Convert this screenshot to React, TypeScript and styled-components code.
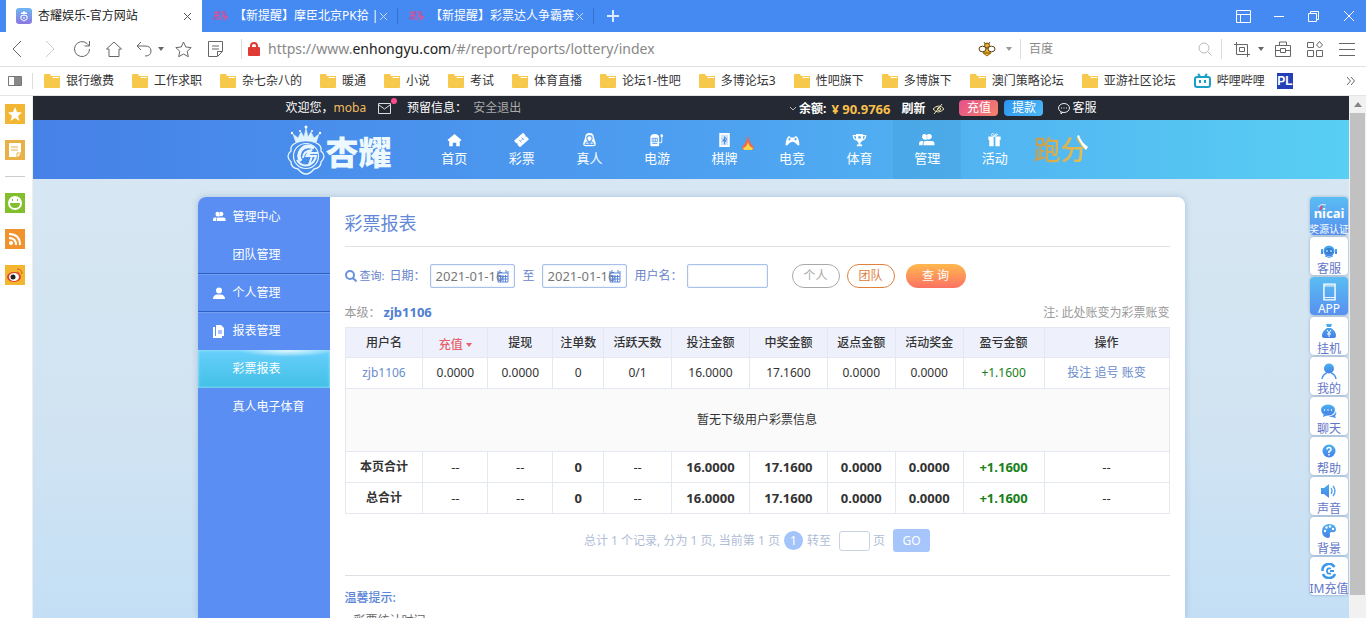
import React from 'react';
import styled, { createGlobalStyle, css } from 'styled-components';

const GlobalStyle = createGlobalStyle`
  * { box-sizing: border-box; }
  body {
    margin: 0;
    overflow: hidden;
    font-family: "Noto Sans", "Noto Sans CJK SC", sans-serif;
    font-size: 12px;
    line-height: 20px;
    color: #333;
  }
  button, input { font: inherit; margin: 0; padding: 0; }
  button { background: none; border: 0; color: inherit; cursor: pointer; }
  a { color: inherit; text-decoration: none; }
  h1, h2, p { margin: 0; padding: 0; }
  svg { display: block; flex: none; }
`;

const Browser = styled.div`
  display: flex;
  flex-direction: column;
  height: 100vh;
  min-width: 1200px;
  background: #fff;
`;

/* ---------- tab strip ---------- */
const TabStrip = styled.header`
  display: flex;
  align-items: center;
  flex: none;
  height: 32px;
  padding-left: 6px;
  background: #4589f2;
  color: #fff;
`;
const Tab = styled.div<{ $active?: boolean }>`
  display: flex;
  align-items: center;
  width: 196px;
  height: 32px;
  padding: 0 10px;
  ${(p) => p.$active && css`background: #fff; color: #222;`}
`;
const TabTitle = styled.span`
  flex: 1;
  margin-left: 6px;
  white-space: nowrap;
`;
const TabClose = styled.button`
  display: grid;
  place-items: center;
  width: 9px;
  height: 16px;
`;
const TabDivider = styled.i`
  width: 1px;
  height: 16px;
  margin-left: -1px;
  background: #3371cc;
`;
const NewTab = styled.button`
  display: grid;
  place-items: center;
  width: 38px;
  height: 32px;
`;
const WindowButtons = styled.div`
  display: flex;
  margin-left: auto;
`;
const WindowButton = styled.button`
  display: grid;
  place-items: center;
  width: 35px;
  height: 32px;
`;

/* ---------- address bar ---------- */
const AddressBar = styled.div`
  display: flex;
  align-items: center;
  flex: none;
  height: 35px;
  border-bottom: 1px solid #e2e2e6;
  color: #666;
`;
const ToolButton = styled.button<{ $w?: number }>`
  display: grid;
  place-items: center;
  width: ${(p) => p.$w ?? 32}px;
  height: 32px;
  flex: none;
`;
const Spacer = styled.i<{ $w: number }>`
  flex: none;
  width: ${(p) => p.$w}px;
`;
const BarDivider = styled.i`
  width: 1px;
  height: 20px;
  background: #dcdce0;
`;
const Url = styled.div`
  flex: 1;
  padding-left: 2px;
  font-size: 14px;
  color: #888;
  white-space: nowrap;
  b { font-weight: 400; color: #222; }
`;
const WebSearch = styled.input`
  width: 160px;
  margin-left: 8px;
  border: 0;
  outline: 0;
  &::placeholder { color: #888; opacity: 1; }
`;

/* ---------- bookmarks ---------- */
const Bookmarks = styled.nav`
  display: flex;
  align-items: center;
  flex: none;
  height: 29px;
  padding: 0 11px 0 8px;
  border-bottom: 1px solid #e4e4e8;
  gap: 18px;
  white-space: nowrap;
`;
const Bookmark = styled.a`
  display: flex;
  align-items: center;
  gap: 6px;
`;
const BookmarkToggle = styled.button`
  display: flex;
  align-items: center;
  width: 25px;
  height: 16px;
  margin-right: -7px;
  border-right: 1px solid #ddd;
`;
const PlBadge = styled.a`
  width: 16px;
  height: 16px;
  margin-left: -6px;
  background: #2340b8;
  color: #fff;
  font: bold 12px/16px "Liberation Sans", sans-serif;
  text-align: center;
`;
const MoreBookmarks = styled.button`
  margin-left: auto;
  color: #666;
`;

/* ---------- body columns ---------- */
const Body = styled.div`
  display: flex;
  flex: 1;
  min-height: 0;
`;
const ToolRail = styled.aside`
  display: flex;
  flex-direction: column;
  align-items: center;
  width: 33px;
  padding: 8px 3px 0 0;
  gap: 16px;
  flex: none;
  border-right: 1px solid #eee;
`;
const RailLine = styled.i`
  width: 20px;
  height: 1px;
  background: #ccc;
`;
const ScrollTrack = styled.div`
  flex: none;
  width: 17px;
  padding: 0 1px;
  background: #f1f1f1;
`;
const ScrollArrow = styled.div`
  display: grid;
  place-items: center;
  height: 17px;
`;
const ScrollThumb = styled.div`
  height: 482px;
  background: #c1c1c1;
`;
const Site = styled.div`
  position: relative;
  display: flex;
  flex-direction: column;
  flex: 1;
  min-width: 0;
  overflow: hidden;
  background: linear-gradient(#d8e7f2, #d2e4f2 60%, #c4dff5);
`;

/* ---------- account bar ---------- */
const AccountBar = styled.div`
  flex: none;
  height: 24px;
  background: #242933;
  color: #fff;
`;
const Centered = styled.div`
  display: flex;
  align-items: center;
  width: 811px;
  height: 100%;
  margin: 0 auto;
`;
const Member = styled.span`
  color: #f2bd5e;
`;
const Mail = styled.a`
  position: relative;
  margin: 0 16px 0 12px;
  &::after {
    content: "";
    position: absolute;
    top: -5px;
    right: -6px;
    width: 6px;
    height: 6px;
    border-radius: 50%;
    background: #ff4b8b;
  }
`;
const Logout = styled.a`
  margin-left: 6px;
  color: #aaa;
`;
const Balance = styled.div`
  display: flex;
  align-items: center;
  margin-left: auto;
  padding-top: 2px;
  font-weight: 700;
`;
const Amount = styled.span`
  margin: 0 11px 0 5px;
  font-size: 13px;
  color: #f9bf4b;
`;
const Pill = styled.button<{ $kind: 'in' | 'out' }>`
  width: 39px;
  height: 16px;
  line-height: 16px;
  margin-right: 6px;
  border-radius: 4px;
  color: #fff;
  background: ${(p) => (p.$kind === 'in'
    ? 'linear-gradient(135deg, #e6508b, #f5826a)'
    : 'linear-gradient(135deg, #2b93f0, #4db9f5)')};
`;
const Service = styled.a`
  display: flex;
  align-items: center;
  gap: 2px;
  margin-left: 9px;
`;

/* ---------- main navigation ---------- */
const NavBar = styled.div`
  flex: none;
  height: 59px;
  background: linear-gradient(90deg, #4681e8, #4d9ff0 50%, #58cff3);
  color: #fff;
`;
const Logo = styled.a`
  display: flex;
  align-items: center;
  width: 135px;
`;
const LogoText = styled.span`
  margin-top: 6px;
  font-size: 33px;
  font-weight: 900;
  line-height: 40px;
  color: #eef9ff;
`;
const NavList = styled.nav`
  display: grid;
  grid-template-columns: repeat(9, 1fr);
  width: 608px;
  height: 100%;
`;
const NavItem = styled.a<{ $active?: boolean }>`
  position: relative;
  display: flex;
  flex-direction: column;
  align-items: center;
  padding-top: 13px;
  gap: 1px;
  font-size: 13px;
  line-height: 20px;
  background: ${(p) => (p.$active ? 'rgba(60, 150, 210, .28)' : 'none')};
`;
const Flame = styled.span`
  position: absolute;
  top: 15px;
  right: 3px;
`;
const GoldLink = styled.a`
  position: relative;
  margin-left: 5px;
  font-size: 27px;
  font-weight: 500;
  line-height: 40px;
  background: linear-gradient(100deg, #b89a5c, #dcae4c 40%, #ecc050);
  background-clip: text;
  color: transparent;
`;
const Glint = styled.svg`
  position: absolute;
  top: 5px;
  right: -1px;
`;

/* ---------- panel ---------- */
const Panel = styled.div`
  display: flex;
  flex: 1;
  width: 75%;
  min-height: 0;
  margin: 18px auto 0;
  border-radius: 8px 8px 0 0;
  background: #fff;
  box-shadow: 0 0 6px rgba(100, 140, 180, .4);
`;
const SideMenu = styled.nav`
  flex: none;
  width: 132px;
  padding-top: 1px;
  border-radius: 8px 0 0 0;
  background: #5a8ef2;
  color: #fff;
`;
const SideItem = styled.a<{ $active?: boolean; $line?: boolean }>`
  display: flex;
  align-items: center;
  height: 38px;
  padding-left: 15px;
  ${(p) => p.$line && css`
    border-bottom: 1px solid #2d5fc4;
    box-shadow: 0 1px #73a0f5;
  `}
  ${(p) => p.$active && css`
    background:
      radial-gradient(ellipse 50px 7px at 68% 0, rgba(255, 255, 255, .9), rgba(255, 255, 255, 0)),
      linear-gradient(#67cffb, #42c0e6);
    box-shadow: inset 0 0 3px #b4ebff;
  `}
`;
const SideIcon = styled.span`
  width: 20px;
`;
const Report = styled.main`
  flex: 1;
  min-width: 0;
  padding: 4px 15px 0;
  overflow: hidden;
`;
const Title = styled.h1`
  font-size: 18px;
  font-weight: 400;
  line-height: 45px;
  color: #6288d8;
  border-bottom: 1px solid #e0e2e8;
`;
const Filters = styled.form`
  display: flex;
  align-items: center;
  height: 24px;
  margin-top: 17px;
  color: #6683cc;
`;
const QueryLabel = styled.span`
  width: 30px;
  margin-left: 3px;
  font-size: 11px;
`;
const Field = styled.label<{ $gap?: number }>`
  position: relative;
  display: flex;
  align-items: center;
  gap: ${(p) => p.$gap ?? 4}px;
  margin-right: 8px;
`;
const TextBox = styled.input<{ $w: number }>`
  width: ${(p) => p.$w}px;
  height: 24px;
  padding-left: 5px;
  border: 1px solid #a9c0e8;
  border-radius: 2px;
  background: #fff;
  box-shadow: inset 0 0 2px #c8d8f2;
  color: #777;
  outline: 0;
`;
const DateBox = styled(TextBox)`
  font-size: 13px;
`;
const CalendarIcon = styled.svg`
  position: absolute;
  right: 6px;
`;
const RoundButton = styled.button<{ $color: string }>`
  width: 48px;
  height: 24px;
  margin-right: 7px;
  border: 1px solid ${(p) => p.$color};
  border-radius: 12px;
  color: ${(p) => p.$color};
`;
const Submit = styled.button`
  width: 60px;
  height: 24px;
  margin-left: 4px;
  border-radius: 12px;
  background: linear-gradient(#ffb84f, #fb7262);
  color: #fff;
`;
const LevelRow = styled.div`
  display: flex;
  justify-content: space-between;
  margin-top: 10px;
  line-height: 29px;
  color: #999;
`;
const Level = styled.b`
  margin-left: 3px;
  font-size: 13px;
  color: #5080d0;
`;
const Table = styled.table`
  width: 100%;
  table-layout: fixed;
  border-collapse: collapse;
  line-height: 18px;
  text-align: center;
  th, td { padding: 0; border: 1px solid #e4e8f0; }
`;
const HeadRow = styled.tr`
  height: 30px;
  background: #eef1fb;
`;
const HeadCell = styled.th`
  font-weight: 500;
`;
const SortButton = styled.button`
  display: inline-flex;
  align-items: center;
  gap: 3px;
  padding-top: 4px;
  color: #e8606c;
  font-weight: 500;
`;
const Row = styled.tr`
  height: 31px;
`;
const TotalName = styled.th`
  font-weight: 700;
`;
const TotalCell = styled.td<{ $blank?: boolean }>`
  font-size: 13px;
  font-weight: ${(p) => (p.$blank ? 400 : 700)};
`;
const EmptyCell = styled.td`
  height: 63px;
  background: #fafafa;
`;
const Profit = styled.td`
  color: #178017;
`;
const TotalProfit = styled(TotalCell)`
  color: #178017;
`;
const Link = styled.a`
  color: #6a8ccc;
`;
const Pager = styled.div`
  display: flex;
  align-items: center;
  justify-content: center;
  margin-top: 15px;
  color: #afbdd6;
`;
const PageDot = styled.button`
  width: 19px;
  height: 19px;
  margin: 0 4px;
  border-radius: 50%;
  background: #a3c4fb;
  color: #fff;
  line-height: 19px;
`;
const PageInput = styled.input`
  width: 31px;
  height: 20px;
  margin: 0 3px 0 8px;
  border: 1px solid #c8d4e4;
  border-radius: 3px;
`;
const GoButton = styled.button`
  width: 37px;
  height: 23px;
  margin-left: 8px;
  border-radius: 3px;
  background: #a5c5fb;
  color: #fff;
`;
const Tips = styled.section`
  margin-top: 23px;
  padding-top: 12px;
  border-top: 1px solid #dcdfe4;
  color: #666;
`;
const TipsTitle = styled.h2`
  font-size: 12px;
  font-weight: 500;
  line-height: 20px;
  color: #5b85d6;
`;
const TipLine = styled.p`
  padding: 3px 0 0 9px;
`;

/* ---------- floating shortcuts ---------- */
const Floats = styled.nav`
  position: absolute;
  top: 101px;
  right: 1px;
  display: flex;
  flex-direction: column;
  gap: 2px;
`;
const Float = styled.a<{ $solid?: boolean }>`
  position: relative;
  display: flex;
  flex-direction: column;
  align-items: center;
  justify-content: space-between;
  width: 38px;
  height: 38px;
  padding-top: 6px;
  border-radius: 4px;
  line-height: 13px;
  white-space: nowrap;
  background: ${(p) => (p.$solid ? 'linear-gradient(#59bdf2, #5790f0)' : '#fff')};
  color: ${(p) => (p.$solid ? '#fff' : '#6276c8')};
  box-shadow: 0 0 3px rgba(80, 110, 150, .5);
`;
const Brand = styled.b`
  font-size: 13px;
  line-height: 20px;
`;
const BrandMark = styled.svg`
  position: absolute;
  top: 6px;
  left: 7px;
`;
const BrandNote = styled.span`
  font-size: 10px;
  line-height: 12px;
`;

/* ---------- icons ---------- */
type LineProps = { d: string; w?: number; h?: number; color?: string; sw?: number };
const Line = ({ d, w = 18, h = w, color = 'currentColor', sw = 1 }: LineProps) => (
  <svg width={w} height={h} viewBox={`0 0 ${w} ${h}`} fill="none" stroke={color} strokeWidth={sw}><path d={d} /></svg>
);
const Caret = ({ color = '#666' }: { color?: string }) => (
  <svg width="6" height="4"><path d="M0 0h6L3 4z" fill={color} /></svg>
);
const Folder = () => (
  <svg width="16" height="14"><path d="M0 1q0-1 1-1h5l1 2h9v11q0 1-1 1H1q-1 0-1-1z" fill="#f6c84c" /><path d="M8 3h7v1H9z" fill="#fff" /></svg>
);
const Bili = () => (
  <svg width="17" height="16" fill="none" stroke="#1b9fc6" strokeWidth="2">
    <rect x="1" y="4" width="15" height="10" rx="2" /><path d="M4 1l2 2M13 1l-2 2M6 7v3M11 7v3" />
  </svg>
);
const SiteIcon = () => (
  <svg width="16" height="16">
    <defs><linearGradient id="fav" x2="0" y2="1"><stop stopColor="#6fb6f0" /><stop offset="1" stopColor="#8a78e2" /></linearGradient></defs>
    <rect width="16" height="16" rx="3" fill="url(#fav)" />
    <path d="M5 4l1 1 2-2 2 2 1-1v2H5z" fill="#fff" /><path d="M8 7l3 1v3l-3 2-3-2V8z" fill="none" stroke="#fff" /><path d="M8 9v2" stroke="#fff" />
  </svg>
);
const PinkIcon = () => (
  <svg width="16" height="12" fill="none" stroke="#c85aa2" strokeWidth="2">
    <path d="M2 3l4-1 1 3-4 1 2 4M9 2l4 1-2 3 4 1-3 3M7 7l2 3" /><path d="M1 9l4-2M12 1l2 5M7 1v4" stroke="#8c63bd" />
  </svg>
);
const Bee = () => (
  <svg width="18" height="16" viewBox="0 0 18 16">
    <path d="M6 1l2 3M12 1l-2 3" stroke="#6b4a12" />
    <circle cx="9" cy="4.500" r="2.500" fill="#e9a92c" stroke="#6b4a12" />
    <path d="M6 9l3-2 3 2 1 3-4 3-4-3z" fill="#f0b429" stroke="#a06c15" />
    <ellipse cx="4.500" cy="8" rx="3.500" ry="2.800" fill="#fff" stroke="#5a4010" />
    <ellipse cx="13.500" cy="8" rx="3.500" ry="2.800" fill="#fff" stroke="#5a4010" />
    <path d="M6 12h6" stroke="#6b4a12" />
  </svg>
);
const Users = ({ w = 16 }: { w?: number }) => (
  <svg width={w} height={w * 14 / 16} viewBox="0 0 18 16" fill="#fff">
    <path d="M4.500 1.500Q7 .5 8.500 2.500 10 .5 13 1.300 15.500 3 14 6q-2 2-4.500 1Q5 9 3.500 5.500 3 3 4.500 1.500z" />
    <path d="M0 14v-3q0-2 3-2h2q-1 1-1 5zM5 14v-3q0-2 3-2h6q3 0 3.500 2v3z" />
    <path d="M9 3v4" stroke="#8fc1f0" strokeWidth=".6" />
  </svg>
);
const PersonIcon = () => (
  <svg width="12" height="12" fill="#fff"><circle cx="6" cy="3.500" r="3" /><path d="M0 12q0-4 4-4.500h4q4 .5 4 4.500z" /></svg>
);
const FilesIcon = () => (
  <svg width="12" height="13" fill="#fff"><path d="M3 0h5l3 3v8H3z" /><path d="M1 2v10h8" stroke="#fff" fill="none" strokeWidth="2" /><path d="M5 5h4v4H5z" fill="#a9c4f6" /></svg>
);
const navIcons: Record<string, React.ReactNode> = {
  home: <path d="M8 1l8 7-1 1h-1v6h-4v-4H6v4H2V9H1L0 8z" />,
  ticket: <g transform="rotate(-42 8 8)"><path d="M1 3h14v4q-2 1 0 2v4H1V9q2-1 0-2z" /><path d="M6 6v4M6 8h5M10 6v4" stroke="#7db4f0" /></g>,
  lady: <g><path d="M8 0q5 0 5 5l2 6q1 4-3 4H4q-4 0-3-4l2-6q0-5 5-5z" /><path d="M8 3q3 0 3 3t-3 4q-3-1-3-4t3-3zM3 13q1-3 3-3l2 2 2-2q2 0 3 3z" fill="none" stroke="#5ca4ef" strokeWidth="1.300" /></g>,
  slot: <g><path d="M1 5q0-4 5-4t5 4v9q0 1-1 1H2q-1 0-1-1z" /><path d="M3 6h6v4H3zM3 12h6" fill="none" stroke="#5ca4ef" /><path d="M5 6v4M7 6v4" stroke="#5ca4ef" /><path d="M11 11h3V4h1" fill="none" stroke="#fff" /><circle cx="14" cy="3" r="1.500" /></g>,
  card: <g><path d="M2 0h12v16H2z" /><path d="M4 2h8v12H4z" fill="#cfe4fb" /><path d="M8 4v9M8 5q3 1 2 3-4 0-4 2M6 7l4 3" fill="none" stroke="#4c8fe0" strokeWidth="1.200" /></g>,
  pad: <g><path d="M3 4q2-1 3 1h4q1-2 3-1 2 2 3 9-1 3-4-1-4-4-8 0-3 4-4 1 1-7 3-9z" /><path d="M3 7h3M4.500 5.500v3" stroke="#4fa3ee" /><circle cx="11.500" cy="7" r="1.200" fill="#4fa3ee" /></g>,
  cup: <g><path d="M4 1h8v6q-1 3-3 4v2h2v2H5v-2h2v-2Q5 10 4 7z" /><path d="M4 3H1q0 4 4 5M12 3h3q0 4-4 5" fill="none" stroke="#fff" strokeWidth="1.500" /><circle cx="8" cy="5" r="1.500" fill="#5ab0ee" /></g>,
  gift: <g><path d="M1 4h6v11H2V8H1zM9 4h6v4h-1v7H9z" /><path d="M8 4Q3 3 5 1t3 3q1-4 3-3t-3 3" fill="none" stroke="#fff" /></g>,
};
const NavIcon = ({ name }: { name: string }) => (name === 'users'
  ? <Users />
  : <svg width={name === 'pad' ? 17 : 15} height="14" viewBox="0 0 16 16" fill="#fff">{navIcons[name]}</svg>);
const Crest = () => (
  <svg width="40" height="50" viewBox="0 0 40 50" fill="none" stroke="#e8f7ff">
    <path d="M7 9l5 4 3-6 3 5 2-9 2 9 3-5 3 6 5-4-3 9q-10-4-20 0z" fill="#dff3ff" strokeWidth=".5" />
    <g fill="#fff" stroke="none"><circle cx="20" cy="2" r="1.500" /><circle cx="6" cy="8" r="1.200" /><circle cx="34" cy="8" r="1.200" /><circle cx="14" cy="6" r="1" /><circle cx="26" cy="6" r="1" /></g>
    <path d="M10 18q-6 2-5 8-6 5 0 11 0 6 7 7 4 5 8 5t8-5q7-1 7-7 6-6 0-11 1-6-5-8" strokeWidth="1.300" />
    <circle cx="20" cy="31" r="12.500" strokeWidth="1.200" />
    <path d="M28 23q-8-4-13 2-4 6 0 11" strokeWidth="3.500" />
    <path d="M11 35q4 7 12 5 6-3 7-9h-8l2-3h8" strokeWidth="2" />
    <path d="M17 33q0-7 9-8-5 3-6 7M26 31l-3 9" strokeWidth="2" />
  </svg>
);
const floatIcons: Record<string, React.ReactNode> = {
  service: <g><circle cx="8" cy="8" r="5.500" /><path d="M0 6h2v5H0zM14 6h2v5h-2z" /><ellipse cx="8" cy="8" rx="4" ry="3" fill="#317fd0" /><path d="M6 7v2M10 7v2" stroke="#fff" /><path d="M4 13q4 3 8 0" stroke="#4aa0ee" fill="none" /></g>,
  bag: <g><path d="M5 1h6l-1 3H6zM6 5h4q5 3 5 8 0 2-2 2H3q-2 0-2-2 0-5 5-8z" /><path d="M6 7l2 3 2-3M8 10v4M6 11h4" stroke="#fff" fill="none" /></g>,
  me: <g><circle cx="8" cy="5.500" r="5" /><path d="M1 16q1-5 5-6M15 16q-1-5-5-6" fill="none" stroke="#4a9cee" strokeWidth="1.500" /></g>,
  chat: <g><ellipse cx="7" cy="7" rx="7" ry="5.500" /><path d="M3 10l-1 4 5-2zM15 8q1 3-1 5l1 2-4-1q-2 0-3-1 6 0 7-5z" /><path d="M3 7h1M6.500 7h1M10 7h1" stroke="#fff" strokeWidth="1.500" /></g>,
  help: <g><circle cx="8" cy="8" r="6.500" /><path d="M6 6.500Q6 4.500 8 4.500t2 2Q10 8 8 8.500V10M8 11v1.500" fill="none" stroke="#fff" strokeWidth="1.500" /></g>,
  sound: <g><path d="M0 5h3l5-4v14l-5-4H0z" /><path d="M10 5q2 3 0 6M12 3q4 5 0 10" fill="none" stroke="#4a9cee" strokeWidth="1.300" /></g>,
  palette: <g><path d="M8 1q7 0 7 6-1 3-4 2-3 0-2 3 0 3-2 3-6-1-6-7 0-6 7-7z" /><g fill="#fff"><circle cx="4" cy="8" r="1.200" /><circle cx="5.500" cy="4.500" r="1.200" /><circle cx="9" cy="3.500" r="1.200" /><circle cx="12" cy="6" r="1.200" /></g></g>,
  im: <g fill="none" stroke="#3a97ea" strokeWidth="2.500"><path d="M13.500 4A6.500 6.500 0 0 0 1.500 8M2 11A6.500 6.500 0 0 0 14 11" /><path d="M10 5.500Q6 4.500 6 8t4 2.500M13 8H9" strokeWidth="1.800" /></g>,
};
const FloatIcon = ({ name }: { name: string }) => (
  <svg width="16" height="16" fill="url(#floatBlue)">
    <defs><linearGradient id="floatBlue" x2="0" y2="1"><stop stopColor="#49b0f0" /><stop offset="1" stopColor="#4880e8" /></linearGradient></defs>
    {floatIcons[name]}
  </svg>
);

/* ---------- data ---------- */
const bookmarks = ['银行缴费', '工作求职', '杂七杂八的', '暖通', '小说', '考试', '体育直播', '论坛1-性吧', '多博论坛3', '性吧旗下', '多博旗下', '澳门策略论坛', '亚游社区论坛'];
const navItems = [
  ['首页', 'home'], ['彩票', 'ticket'], ['真人', 'lady'], ['电游', 'slot'], ['棋牌', 'card'],
  ['电竞', 'pad'], ['体育', 'cup'], ['管理', 'users'], ['活动', 'gift'],
];
const floats = [['挂机', 'bag'], ['我的', 'me'], ['聊天', 'chat'], ['帮助', 'help'], ['声音', 'sound'], ['背景', 'palette'], ['IM充值', 'im']];
const columns: [string, number][] = [
  ['用户名', 78], ['充值', 65], ['提现', 65], ['注单数', 51], ['活跃天数', 68], ['投注金额', 78],
  ['中奖金额', 78], ['返点金额', 68], ['活动奖金', 68], ['盈亏金额', 81], ['操作', 125],
];
const totals = ['--', '--', '0', '--', '16.0000', '17.1600', '0.0000', '0.0000'];

const closeX = 'M1 1l7 7M8 1l-7 7';

const DateField = ({ label, gap }: { label: string; gap?: number }) => (
  <Field $gap={gap}>
    {label}
    <DateBox $w={85} defaultValue="2021-01-16" />
    <CalendarIcon width="12" height="13" fill="none" stroke="#5b84d8">
      <path d="M1 3h10M1 1v11h10V1M3 0v3M9 0v3M3.500 5v7M6 5v7M8.500 5v7M1 6.500h10M1 9h10" />
    </CalendarIcon>
  </Field>
);

export default function App() {
  return (
    <Browser>
      <GlobalStyle />
      <TabStrip>
        <Tab $active>
          <SiteIcon /><TabTitle>杏耀娱乐-官方网站</TabTitle>
          <TabClose aria-label="关闭"><Line w={9} d={closeX} color="#555" /></TabClose>
        </Tab>
        {['【新提醒】摩臣北京PK拾 |', '【新提醒】彩票达人争霸赛'].map((t) => (
          <React.Fragment key={t}>
            <Tab>
              <PinkIcon /><TabTitle>{t}</TabTitle>
              <TabClose aria-label="关闭"><Line w={9} d={closeX} color="#c5dcff" /></TabClose>
            </Tab>
            <TabDivider />
          </React.Fragment>
        ))}
        <NewTab aria-label="新标签"><Line w={12} d="M6 0v12M0 6h12" sw={2} color="#dce9ff" /></NewTab>
        <WindowButtons>
          <WindowButton aria-label="皮肤"><Line w={15} h={13} d="M.5.5h14v12H.5zM.5 4.500h14M4.500 4.500v8" /></WindowButton>
          <WindowButton aria-label="最小化"><Line w={10} h={3} d="M0 1.500h10" /></WindowButton>
          <WindowButton aria-label="还原"><Line w={11} d="M.5 2.500h8v8h-8zM2.500 2.500v-2h8v8h-2" /></WindowButton>
          <WindowButton aria-label="关闭"><Line w={10} d="M0 0l10 10M10 0L0 10" /></WindowButton>
        </WindowButtons>
      </TabStrip>

      <AddressBar>
        <ToolButton $w={34} aria-label="后退"><Line w={10} h={16} d="M9 0L1 8l8 8" /></ToolButton>
        <ToolButton aria-label="前进"><Line w={10} h={16} d="M1 0l8 8-8 8" color="#ccc" /></ToolButton>
        <ToolButton aria-label="刷新"><Line w={18} d="M16.500 9A7.500 7.500 0 1 1 14 3.500L16.500 6M16.500 1v5h-5" /></ToolButton>
        <ToolButton aria-label="主页"><Line w={16} d="M.5 8L8 1l7.500 7H13v7.500H3V8z" /></ToolButton>
        <ToolButton $w={28} aria-label="撤销"><Line w={16} h={15} d="M5 0L1 4l4 4M1 4h8q6 0 6 5t-6 5" /></ToolButton>
        <ToolButton $w={6} aria-label="更多"><Caret /></ToolButton>
        <ToolButton $w={38} aria-label="收藏"><Line w={17} d="M8.500 1l2.300 5 5.400.6-4 3.700 1.100 5.400-4.800-2.700-4.800 2.700 1.100-5.400-4-3.700 5.400-.6z" /></ToolButton>
        <ToolButton $w={26} aria-label="笔记"><Line w={15} h={16} d="M.5.5h14v10l-5 5h-9zM14 10.500H9.500V15M4 5h7M4 8h7" /></ToolButton>
        <Spacer $w={13} />
        <BarDivider />
        <ToolButton $w={24} aria-label="安全信息">
          <svg width="12" height="14"><path d="M3 7V4q0-3 3-3t3 3v3" fill="none" stroke="#e03a35" strokeWidth="2" /><rect y="5" width="12" height="9" rx="1" fill="#e03a35" /></svg>
        </ToolButton>
        <Url role="textbox" aria-label="地址">https://www.<b>enhongyu.com</b>/#/report/reports/lottery/index</Url>
        <ToolButton $w={38} aria-label="插件"><Bee /></ToolButton>
        <ToolButton $w={6} aria-label="更多"><Caret color="#999" /></ToolButton>
        <Spacer $w={8} />
        <BarDivider />
        <WebSearch placeholder="百度" aria-label="搜索" />
        <ToolButton aria-label="搜索"><Line w={14} d="M13.500 13.500L10 10M11 6a5 5 0 1 1-10 0 5 5 0 0 1 10 0z" color="#bbb" /></ToolButton>
        <BarDivider />
        <Spacer $w={4} />
        <ToolButton aria-label="截图"><Line w={16} h={15} d="M2.500 0v12.500H16M0 2.500h13.500V15M5.500 5.500h5v4h-5z" /></ToolButton>
        <Caret />
        <ToolButton $w={38} aria-label="工具箱"><Line w={16} h={16} d="M.5 4.500h15v11H.5zM4.500 4V1h7v3M.5 9.500H5M11 9.500h4.500M5.500 7.500h5v4h-5z" /></ToolButton>
        <ToolButton $w={26} aria-label="应用"><Line w={16} d="M.5 1.500h6v5h-6zM.5 9.500h6v6h-6zM9.500 9.500h6v6h-6zM12.500.5L15.500 4l-3 3-3-3z" /></ToolButton>
        <ToolButton $w={38} aria-label="菜单"><Line w={16} h={13} d="M0 .5h16M0 6.500h16M0 12.500h16" /></ToolButton>
      </AddressBar>

      <Bookmarks>
        <BookmarkToggle aria-label="侧栏">
          <svg width="14" height="10"><path d="M.5.5h13v9H.5z" fill="#fff" stroke="#777" /><path d="M6 1h7v8H6z" fill="#888" /></svg>
        </BookmarkToggle>
        {bookmarks.map((b) => <Bookmark key={b} href="#"><Folder />{b}</Bookmark>)}
        <Bookmark href="#"><Bili />哔哩哔哩</Bookmark>
        <PlBadge href="#">PL</PlBadge>
        <MoreBookmarks aria-label="更多书签"><Line w={9} h={8} d="M1 0l3.500 4L1 8M5 0l3.500 4L5 8" /></MoreBookmarks>
      </Bookmarks>

      <Body>
        <ToolRail>
          <svg width="20" height="20"><path d="M0 0h20v20H0z" fill="#f2b632" /><path d="M10 3l2 5 5 .5-4 3.500 1.500 5L10 14l-4.500 3L7 12 3 8.500 8 8z" fill="#fff" /></svg>
          <svg width="20" height="20"><path d="M0 0h20v20H0z" fill="#e9b145" /><path d="M4 3h12v10l-3 4H4z" fill="#fff" /><path d="M6 7h7M6 10h7M12 17v-4h4" stroke="#e9b145" fill="none" /></svg>
          <RailLine />
          <svg width="20" height="20"><path d="M0 0h20v20H0z" fill="#83bf2c" /><circle cx="10" cy="10" r="7" fill="#fff" /><path d="M5 10h10q0 5-5 5t-5-5zM7 6h1v2H7zM12 6h1v2h-1z" fill="#83bf2c" /></svg>
          <svg width="20" height="20"><path d="M0 0h20v20H0z" fill="#f0932f" /><circle cx="6" cy="14" r="2" fill="#fff" /><path d="M4 9q7 0 7 7M4 5q11 0 11 11" stroke="#fff" strokeWidth="2" fill="none" /></svg>
          <svg width="20" height="20"><path d="M0 0h20v20H0z" fill="#f3b62e" /><ellipse cx="9" cy="12" rx="7" ry="5" fill="#d9432f" /><ellipse cx="9" cy="12" rx="5" ry="4" fill="#fff" /><circle cx="8" cy="12" r="2.500" fill="#222" /><path d="M12 4q5 0 5 5M12 7q2 0 2 2" stroke="#e0532a" fill="none" /></svg>
        </ToolRail>

        <Site>
          <AccountBar>
            <Centered>
              欢迎您，<Member>moba</Member>
              <Mail href="#" aria-label="消息"><Line w={13} h={11} d="M.5.5h12v10H.5zM1 2l5.500 4L12 2" color="#ddd" /></Mail>
              预留信息：<Logout href="#">安全退出</Logout>
              <Balance>
                <Line w={6} h={4} d="M0 0l3 3 3-3" color="#bbb" />&nbsp;余额: <Amount>¥ 90.9766</Amount>刷新
                <svg width="34" height="12" fill="none" stroke="#e9dfae"><path d="M8 6q6-6 11 0-6 6-11 0zM17 1L9 11" /><circle cx="14" cy="6" r="1.500" /></svg>
              </Balance>
              <Pill $kind="in">充值</Pill>
              <Pill $kind="out">提款</Pill>
              <Service href="#">
                <svg width="12" height="12" fill="none" stroke="#eee"><ellipse cx="6" cy="6" rx="5.500" ry="4.500" /><path d="M3 6h1M5.500 6h1M8 6h1M3 10v2l2-2" /></svg>
                客服
              </Service>
            </Centered>
          </AccountBar>

          <NavBar>
            <Centered>
              <Logo href="#"><Crest /><LogoText>杏耀</LogoText></Logo>
              <NavList>
                {navItems.map(([label, icon]) => (
                  <NavItem key={label} href="#" $active={label === '管理'}>
                    <NavIcon name={icon} />{label}
                    {icon === 'card' && (
                      <Flame><svg width="14" height="16"><path d="M7 0q-1 7-6 12l1 3h10l1-3Q8 8 7 0z" fill="#ee6a4a" /><path d="M7 7q-1 5-5 6l1 2h8l1-2Q8 12 7 7z" fill="#f8d448" /></svg></Flame>
                    )}
                  </NavItem>
                ))}
              </NavList>
              <GoldLink href="#">跑分<Glint width="14" height="16"><path d="M4 0q2 7 9 12l-2 3Q6 10 2 1z" fill="#fff" /></Glint></GoldLink>
            </Centered>
          </NavBar>

          <Panel>
            <SideMenu>
              <SideItem href="#"><SideIcon><Users w={13} /></SideIcon>管理中心</SideItem>
              <SideItem href="#" $line><SideIcon />团队管理</SideItem>
              <SideItem href="#" $line><SideIcon><PersonIcon /></SideIcon>个人管理</SideItem>
              <SideItem href="#"><SideIcon><FilesIcon /></SideIcon>报表管理</SideItem>
              <SideItem href="#" $active><SideIcon />彩票报表</SideItem>
              <SideItem href="#"><SideIcon />真人电子体育</SideItem>
            </SideMenu>
            <Report>
              <Title>彩票报表</Title>
              <Filters>
                <Line w={12} d="M11.500 11.500L8 8M9 5a4 4 0 1 1-8 0 4 4 0 0 1 8 0z" sw={2} color="#6b92dc" />
                <QueryLabel>查询:</QueryLabel>
                <DateField label="日期：" />
                <DateField label="至" gap={7} />
                <Field>用户名：<TextBox $w={81} /></Field>
                <Spacer $w={16} />
                <RoundButton type="button" $color="#a9a9a9">个人</RoundButton>
                <RoundButton type="button" $color="#e0803c">团队</RoundButton>
                <Submit type="button">查 询</Submit>
              </Filters>
              <LevelRow>
                <span>本级：<Level>zjb1106</Level></span>
                <span>注: 此处账变为彩票账变</span>
              </LevelRow>
              <Table>
                <colgroup>
                  {columns.map(([c, w]) => <col key={c} style={{ width: `${w / 8.25}%` }} />)}
                </colgroup>
                <thead>
                  <HeadRow>
                    {columns.map(([c]) => (
                      <HeadCell key={c} scope="col">
                        {c === '充值' ? <SortButton>{c}<Caret color="#e8606c" /></SortButton> : c}
                      </HeadCell>
                    ))}
                  </HeadRow>
                </thead>
                <tbody>
                  <Row>
                    <td><Link href="#">zjb1106</Link></td>
                    {['0.0000', '0.0000', '0', '0/1', '16.0000', '17.1600', '0.0000', '0.0000'].map((v, i) => <td key={i}>{v}</td>)}
                    <Profit>+1.1600</Profit>
                    <td><Link href="#">投注</Link> <Link href="#">追号</Link> <Link href="#">账变</Link></td>
                  </Row>
                  <tr><EmptyCell colSpan={11}>暂无下级用户彩票信息</EmptyCell></tr>
                  {['本页合计', '总合计'].map((name) => (
                    <Row key={name}>
                      <TotalName scope="row">{name}</TotalName>
                      {totals.map((v, i) => <TotalCell key={i} $blank={v === '--'}>{v}</TotalCell>)}
                      <TotalProfit>+1.1600</TotalProfit>
                      <TotalCell $blank>--</TotalCell>
                    </Row>
                  ))}
                </tbody>
              </Table>
              <Pager>
                总计 1 个记录, 分为 1 页, 当前第 1 页
                <PageDot>1</PageDot>转至
                <PageInput aria-label="页码" />页
                <GoButton>GO</GoButton>
              </Pager>
              <Tips>
                <TipsTitle>温馨提示:</TipsTitle>
                <TipLine>彩票统计时间</TipLine>
              </Tips>
            </Report>
          </Panel>

          <Floats>
            <Float href="#" $solid>
              <Brand>nicai</Brand>
              <BrandMark width="10" height="8" fill="none"><path d="M1 4q3-4 8-2" stroke="#e6f6ff" /><path d="M3 7l2-4" stroke="#e0457c" strokeWidth="2" /></BrandMark>
              <BrandNote>奖源认证</BrandNote>
            </Float>
            <Float href="#"><FloatIcon name="service" />客服</Float>
            <Float href="#" $solid>
              <svg width="13" height="18" viewBox="0 0 14 19"><path d="M1 1h12v17H1z" fill="none" stroke="#fff" strokeWidth="1.500" /><path d="M1 15.500h12M1 3h12" stroke="#fff" /></svg>
              APP
            </Float>
            {floats.map(([label, icon]) => <Float key={icon} href="#"><FloatIcon name={icon} />{label}</Float>)}
          </Floats>
        </Site>

        <ScrollTrack>
          <ScrollArrow><svg width="8" height="5"><path d="M0 5h8L4 0z" fill="#888" /></svg></ScrollArrow>
          <ScrollThumb />
        </ScrollTrack>
      </Body>
    </Browser>
  );
}
